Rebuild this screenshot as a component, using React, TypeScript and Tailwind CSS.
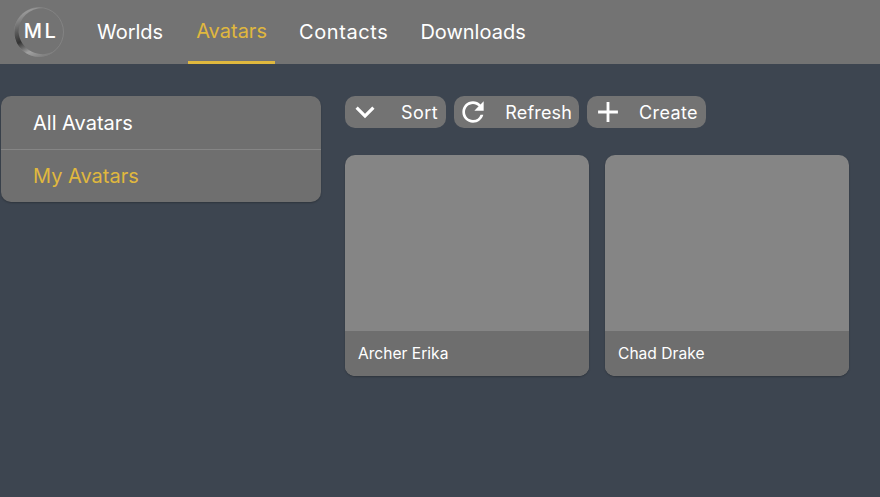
import { MdAdd, MdExpandMore, MdRefresh } from 'react-icons/md';

const font = 'font-["Inter","Liberation_Sans",sans-serif]';

function Logo() {
  return (
    <svg width="52" height="52" viewBox="0 0 52 52" className="shrink-0">
      <defs>
        <linearGradient id="ring" x1="0.3" y1="0" x2="0.7" y2="1">
          <stop offset="0" stopColor="#a8a8a8" />
          <stop offset="0.35" stopColor="#5a5a5a" />
          <stop offset="0.55" stopColor="#333333" />
          <stop offset="0.8" stopColor="#a0a0a0" />
          <stop offset="1" stopColor="#808080" />
        </linearGradient>
      </defs>
      <circle cx="26" cy="26" r="24.5" fill="none" stroke="#8a8a8a" strokeWidth="0.7" />
      <path d="M30 2 A24.5 24.5 0 1 0 42 44.6 A24 24 0 0 1 5.5 26 A24 24 0 0 1 30 2 Z" fill="url(#ring)" />
      <text x="28" y="32" textAnchor="middle" fill="#fff" fontSize="20" fontWeight="500" letterSpacing="2.5" fontFamily="Inter, sans-serif">ML</text>
    </svg>
  );
}

function NavItem({ label, active, extra }: { label: string; active?: boolean; extra?: string }) {
  return (
    <a className={`h-16 px-[8.5px] flex items-center border-b-[3px] text-[20px] ${active ? 'pt-[1px] border-[#e0b83e] text-[#e0b83e]' : 'pt-[2px] border-transparent text-white'} ${extra ?? ''}`}>
      {label}
    </a>
  );
}

function ToolButton({ icon, label, width, extra }: { icon: React.ReactNode; label: string; width: string; extra?: string }) {
  return (
    <button className={`h-8 rounded-[10px] bg-[#737373] text-white text-[18px] flex items-center justify-between pl-[8px] pr-[8px] ${width}`}>
      <span className="w-6 h-6 flex items-center justify-center overflow-visible">{icon}</span>
      <span className={extra}>{label}</span>
    </button>
  );
}

function AvatarCard({ name }: { name: string }) {
  return (
    <div className="w-[244px] h-[221px] rounded-[10px] overflow-hidden bg-[#858585] flex flex-col justify-end shadow-[0_1px_2px_rgba(0,0,0,0.25)]">
      <div className="h-[45px] bg-[#6e6e6e] flex items-center pl-[13px] text-white text-[15.6px]">{name}</div>
    </div>
  );
}

export default function App() {
  return (
    <div className={`w-[880px] h-[497px] bg-[#3d4550] overflow-hidden ${font}`}>
      <header className="h-16 bg-[#737373] flex items-center pl-[13px]">
        <Logo />
        <nav className="flex ml-[23.5px] gap-4">
          <NavItem label="Worlds" />
          <NavItem label="Avatars" active />
          <NavItem label="Contacts" extra="tracking-[0.6px] -ml-[1px]" />
          <NavItem label="Downloads" extra="-ml-[1px]" />
        </nav>
      </header>

      <main className="flex pt-8 pl-[1px]">
        <aside className="w-[320px] h-[106px] rounded-[10px] bg-[#6f6f6f] flex flex-col text-[20px] shadow-[0_1px_2px_rgba(0,0,0,0.25)]">
          <div className="h-[54px] flex items-center pl-8 text-white border-b border-[#858585]">All Avatars</div>
          <div className="h-[52px] flex items-center pl-8 text-[#e0b83e]">My Avatars</div>
        </aside>

        <section className="ml-6">
          <div className="flex gap-2">
            <ToolButton icon={<MdExpandMore size={38} className="shrink-0" />} label="Sort" width="w-[101px]" extra="tracking-[0.4px]" />
            <ToolButton icon={<MdRefresh size={32} className="shrink-0 -ml-[2px]" />} label="Refresh" width="w-[125px]" extra="tracking-[0.15px] mr-[-1px]" />
            <ToolButton icon={<MdAdd size={34} className="shrink-0 ml-[1px]" />} label="Create" width="w-[119px]" extra="tracking-[0.4px]" />
          </div>
          <div className="flex gap-4 mt-[27px]">
            <AvatarCard name="Archer Erika" />
            <AvatarCard name="Chad Drake" />
          </div>
        </section>
      </main>
    </div>
  );
}
